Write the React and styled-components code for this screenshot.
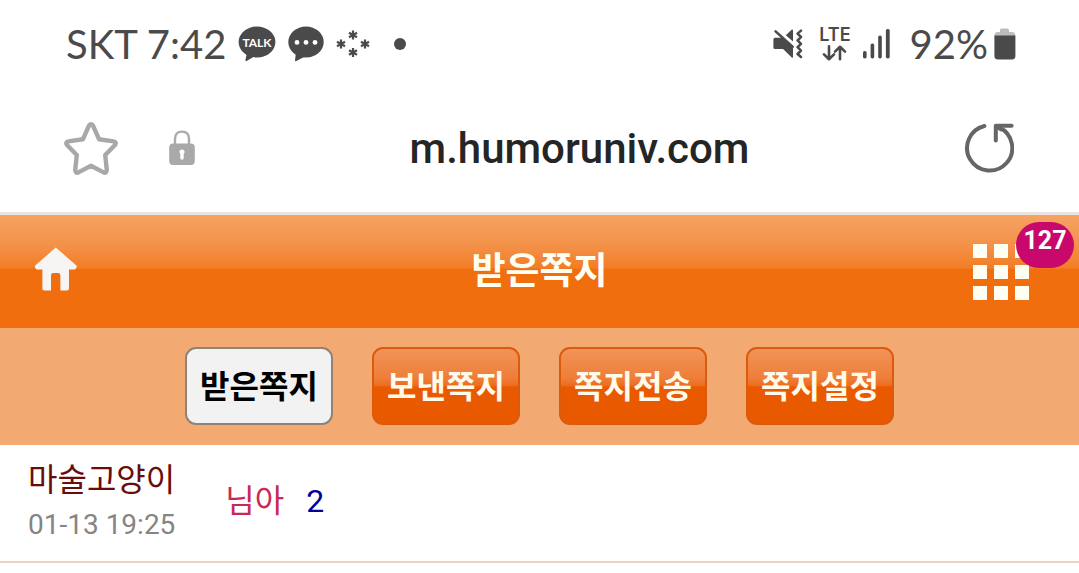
import React, { useState } from "react";
import styled, { createGlobalStyle, css } from "styled-components";

const tabs = ["받은쪽지", "보낸쪽지", "쪽지전송", "쪽지설정"];

const messages = [
  { id: 1, sender: "마술고양이", date: "01-13 19:25", title: "님아", count: 2 },
];

function TalkIcon() {
  return (
    <svg width="38" height="36" viewBox="0 0 38 36" fill="#4a4a4a">
      <ellipse cx="19" cy="16" rx="18.4" ry="15.4" />
      <path d="M9 26 L7.4 34.6 Q7.6 35.6 8.6 35 L19 29 Z" />
      <text
        x="19"
        y="21"
        fill="#fff"
        fontFamily="Lato, sans-serif"
        fontSize="12"
        fontWeight="700"
        textAnchor="middle"
      >
        TALK
      </text>
    </svg>
  );
}

function MessageIcon() {
  return (
    <svg width="36" height="36" viewBox="0 0 36 36" fill="#4a4a4a">
      <ellipse cx="18" cy="16" rx="17.7" ry="15.4" />
      <path d="M8 26 L7 34.6 Q7.2 35.6 8.2 35 L20 29 Z" />
      <g fill="#fff">
        <circle cx="9" cy="16.4" r="2.4" />
        <circle cx="18" cy="16.4" r="2.4" />
        <circle cx="27" cy="16.4" r="2.4" />
      </g>
    </svg>
  );
}

function StarsIcon() {
  const points = [
    [17, 5],
    [5, 14],
    [29, 14],
    [17, 22.5],
  ];
  return (
    <svg width="34" height="28" viewBox="0 0 34 28" stroke="#4a4a4a" strokeWidth="2.2">
      {points.map(([x, y]) => (
        <path
          key={`${x}-${y}`}
          d={`M${x} ${y - 4.6}V${y + 4.6}M${x - 4} ${y - 2.3}L${x + 4} ${y + 2.3}M${x - 4} ${y + 2.3}L${x + 4} ${y - 2.3}`}
        />
      ))}
    </svg>
  );
}

function MuteIcon() {
  return (
    <svg width="30" height="30" viewBox="0 0 30 30" fill="#4a4a4a">
      <path d="M2 8.8H9L20 18V28.2Q19.6 29 18.8 28.4L10 20H2Q.4 20 .4 18.4V10.4Q.4 8.8 2 8.8Z" />
      <path d="M12.8 6.2L18.6 .8Q20 0 20 1.4V12.6Z" />
      <path
        d="M2.6 2.4L19.6 17.8M28 1.6L24.6 4.6L28 8L24.6 11.4L28 14.8L24.6 18.2L28 21.6L24.6 25L28 28"
        fill="none"
        stroke="#4a4a4a"
        strokeWidth="2.5"
        strokeLinecap="round"
        strokeLinejoin="round"
      />
    </svg>
  );
}

function DataArrowsIcon() {
  return (
    <svg
      width="25"
      height="16"
      viewBox="0 0 25 16"
      fill="none"
      stroke="#4a4a4a"
      strokeWidth="2.6"
      strokeLinecap="round"
      strokeLinejoin="round"
    >
      <path d="M7 1.4V14M2 9.4L7 14.2L12 9.4M18 14.2V2M13 6.6L18 1.8L23 6.6" />
    </svg>
  );
}

function SignalIcon() {
  return (
    <svg width="27" height="30" viewBox="0 0 27 30" fill="#4a4a4a">
      <rect x="0" y="22" width="3.6" height="7.4" rx="1.6" />
      <rect x="7.6" y="14.4" width="3.6" height="15" rx="1.6" />
      <rect x="15.2" y="6.6" width="3.6" height="22.8" rx="1.6" />
      <rect x="22.9" y="0" width="3.8" height="29.4" rx="1.6" />
    </svg>
  );
}

function BatteryIcon() {
  return (
    <svg width="22" height="32" viewBox="0 0 22 32">
      <path d="M6 4V2Q6 .4 7.6 .4H13.4Q15 .4 15 2V4H18Q21.4 4 21.4 8H.4Q.4 4 3.6 4Z" fill="#bdbdbd" />
      <path d="M.4 7.6H21.4V28Q21.4 31.4 18 31.4H3.8Q.4 31.4 .4 28Z" fill="#4a4a4a" />
    </svg>
  );
}

function StarIcon() {
  return (
    <svg width="54" height="54" viewBox="0 0 54 54" fill="none" stroke="#a7a9a8" strokeWidth="4.4" strokeLinejoin="round">
      <path d="M25 4.6Q27 1.8 29 4.6L35 18.2L49.6 20.4Q53 21.4 51 24L41.2 34L42.8 49Q42.6 52.6 39.6 51.4L27 44.8L14.4 51.4Q11.4 52.6 11.2 49L12.8 34L3 24Q1 21.4 4.4 20.4L19 18.2Z" />
    </svg>
  );
}

function LockIcon() {
  return (
    <svg width="26" height="36" viewBox="0 0 26 36">
      <path d="M6 15V9Q6 1.6 13 1.6T20 9V15" fill="none" stroke="#a9a9a9" strokeWidth="2.4" />
      <rect x=".2" y="13.4" width="25.6" height="21.6" rx="4" fill="#a9a9a9" />
      <path d="M13 19.4a2.6 2.6 0 0 1 1.7 4.6v4a1.7 1.7 0 0 1-3.4 0v-4a2.6 2.6 0 0 1 1.7-4.6Z" fill="#fff" />
    </svg>
  );
}

function ReloadIcon() {
  return (
    <svg
      width="50"
      height="50"
      viewBox="0 0 50 50"
      fill="none"
      stroke="#666"
      strokeWidth="4"
      strokeLinecap="round"
      strokeLinejoin="round"
    >
      <path d="M20.4 3A22.6 22.6 0 1 0 35 4.4" />
      <path d="M47.6 2.8H31.8V17.4M32 3L37 6.4" />
    </svg>
  );
}

function HomeIcon() {
  return (
    <svg width="44" height="44" viewBox="0 0 44 44" fill="#f7f5f3">
      <path d="M21.8 .6L42.4 18.4Q43.6 20.4 41 22.4H35V41.4Q35 43.4 33 43.4H26.4V28.4Q26.4 26 24 26H19.4Q17 26 17 28.4V43.4H10.4Q8.4 43.4 8.4 41.4V22.4H2.6Q0 20.4 1.2 18.4Z" />
    </svg>
  );
}

function GridIcon() {
  const cells = [0, 21, 42];
  return (
    <svg width="56" height="56" viewBox="0 0 56 56" fill="#fffef2">
      {cells.map((y) =>
        cells.map((x) => <rect key={`${x}-${y}`} x={x} y={y} width="14" height="14" />)
      )}
    </svg>
  );
}

function App() {
  const [activeTab, setActiveTab] = useState(tabs[0]);
  const [url, setUrl] = useState("m.humoruniv.com");

  return (
    <>
      <GlobalStyle />
      <StatusBar>
        <StatusGroup>
          <StatusText>SKT 7:42</StatusText>
          <TalkIcon />
          <MessageIcon />
          <StarsIcon />
          <Dot />
        </StatusGroup>
        <StatusGroup>
          <MuteIcon />
          <Network>
            <NetworkLabel>LTE</NetworkLabel>
            <DataArrowsIcon />
          </Network>
          <SignalIcon />
          <BatteryLevel>
            <StatusText>92%</StatusText>
            <BatteryIcon />
          </BatteryLevel>
        </StatusGroup>
      </StatusBar>

      <AddressBar>
        <IconButton aria-label="북마크">
          <StarIcon />
        </IconButton>
        <LockIcon />
        <UrlInput
          aria-label="주소"
          value={url}
          spellCheck={false}
          onChange={(e) => setUrl(e.target.value)}
        />
        <IconButton aria-label="새로고침">
          <ReloadIcon />
        </IconButton>
      </AddressBar>

      <Header>
        <HomeLink href="/" aria-label="홈">
          <HomeIcon />
        </HomeLink>
        <Title>{activeTab}</Title>
        <MenuButton aria-label="메뉴">
          <GridIcon />
          <Badge>127</Badge>
        </MenuButton>
      </Header>

      <TabBar>
        {tabs.map((tab) => (
          <TabButton key={tab} $active={tab === activeTab} onClick={() => setActiveTab(tab)}>
            {tab}
          </TabButton>
        ))}
      </TabBar>

      <MessageList>
        {messages.map((item) => (
          <MessageRow key={item.id}>
            <Sender>
              <SenderName>{item.sender}</SenderName>
              <SentAt>{item.date}</SentAt>
            </Sender>
            <MessageLink href="/">
              {item.title}
              <Count>{item.count}</Count>
            </MessageLink>
          </MessageRow>
        ))}
      </MessageList>
    </>
  );
}

const GlobalStyle = createGlobalStyle`
  * {
    box-sizing: border-box;
  }

  body {
    margin: 0;
    background: #fff;
    font-family: Roboto, "Noto Sans CJK KR", sans-serif;
  }

  svg {
    display: block;
    flex: none;
  }
`;

const StatusBar = styled.div`
  display: flex;
  align-items: center;
  justify-content: space-between;
  height: 88px;
  padding: 0 63px 0 66px;
`;

const StatusGroup = styled.div`
  display: flex;
  align-items: center;
  gap: 12px;
`;

const StatusText = styled.span`
  color: #4a4a4a;
  font-family: Lato, sans-serif;
  font-size: 40px;
  line-height: 48px;
`;

const Dot = styled.span`
  width: 12px;
  height: 12px;
  margin-left: 12px;
  border-radius: 50%;
  background: #4a4a4a;
`;

const Network = styled.div`
  display: flex;
  flex-direction: column;
  align-items: center;
  gap: 2px;
  margin-left: 4px;
`;

const NetworkLabel = styled.span`
  color: #4a4a4a;
  font-family: Inter, sans-serif;
  font-size: 18px;
  font-weight: 600;
  line-height: 16px;
`;

const BatteryLevel = styled.div`
  display: flex;
  align-items: center;
  gap: 6px;
  margin-left: 8px;
`;

const AddressBar = styled.div`
  display: flex;
  align-items: center;
  height: 127px;
  padding: 0 65px 4px 64px;
  border-bottom: 3px solid #ebe4df;
`;

const IconButton = styled.button`
  margin: 0;
  padding: 0;
  border: 0;
  background: none;
  cursor: pointer;

  & + svg {
    margin-left: 51px;
  }
`;

const UrlInput = styled.input`
  flex: 1;
  min-width: 0;
  padding: 2px 0 0;
  border: 0;
  outline: 0;
  background: none;
  color: #252525;
  font-family: Roboto, sans-serif;
  font-size: 42px;
  font-weight: 500;
  line-height: 52px;
  text-align: center;
`;

const Header = styled.header`
  display: grid;
  grid-template-columns: 1fr auto 1fr;
  align-items: center;
  height: 113px;
  padding: 0 50px 0 34px;
  background: linear-gradient(#f6a263, #f3934b 25%, #f27d26 47%, #f06e0e 48%, #f06e0e);
`;

const HomeLink = styled.a`
  justify-self: start;
  padding-bottom: 6px;
`;

const Title = styled.h1`
  margin: 0;
  padding-left: 16px;
  color: #fffef2;
  font-size: 37px;
  font-weight: 700;
  line-height: 52px;
`;

const MenuButton = styled(IconButton)`
  position: relative;
  justify-self: end;
`;

const Badge = styled.span`
  position: absolute;
  top: -22px;
  right: -45px;
  width: 58px;
  height: 46px;
  border-radius: 23px;
  background: #c8086a;
  color: #fff;
  font-family: Roboto, sans-serif;
  font-size: 25px;
  font-weight: 700;
  line-height: 38px;
  text-align: center;
`;

const TabBar = styled.nav`
  display: flex;
  justify-content: center;
  gap: 39px;
  padding: 19px 0 20px;
  background: #f2aa72;
`;

const TabButton = styled.button`
  width: 148px;
  height: 78px;
  padding: 0 0 4px;
  border: 2px solid #db5a0c;
  border-radius: 11px;
  background: linear-gradient(#f2955c, #ee7e38 40%, #ec6c1c 50%, #e95a00 51%, #e95a00);
  background-origin: border-box;
  color: #fffaea;
  font-family: "Noto Sans CJK KR", sans-serif;
  font-size: 32px;
  font-weight: 700;
  line-height: 48px;
  cursor: pointer;

  ${({ $active }) =>
    $active &&
    css`
      border-color: #8f8377;
      background: #f2f2f2;
      color: #000;
    `}
`;

const MessageList = styled.ul`
  margin: 0;
  padding: 0;
  list-style: none;
`;

const MessageRow = styled.li`
  display: flex;
  align-items: center;
  gap: 50px;
  height: 118px;
  padding: 0 28px 8px;
  border-bottom: 2px solid #ecd3bf;
`;

const Sender = styled.div`
  display: flex;
  flex-direction: column;
  gap: 4px;
`;

const SenderName = styled.span`
  color: #6a0d0a;
  font-family: "Noto Sans CJK KR", sans-serif;
  font-size: 32px;
  line-height: 48px;
`;

const SentAt = styled.span`
  color: #858585;
  font-size: 28px;
  line-height: 40px;
`;

const MessageLink = styled.a`
  color: #c92a55;
  font-family: "Noto Sans CJK KR", sans-serif;
  font-size: 32px;
  line-height: 48px;
  text-decoration: none;
`;

const Count = styled.span`
  margin-left: 22px;
  color: #00009a;
  font-family: Roboto, sans-serif;
`;

export default App;
